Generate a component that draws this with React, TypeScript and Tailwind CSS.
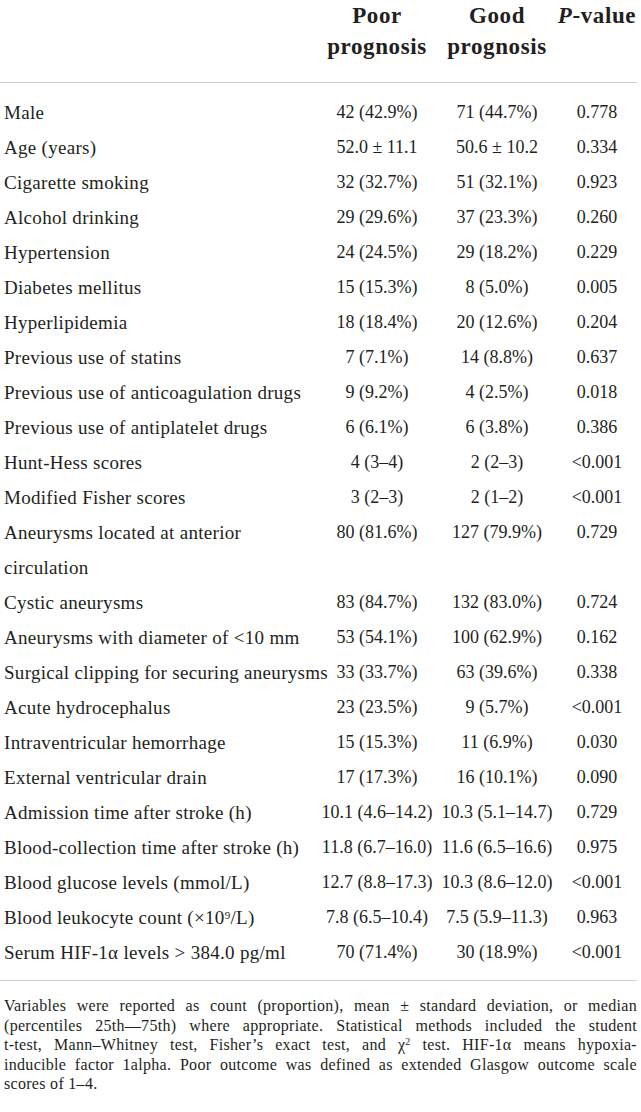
import React from "react";

type Row = {
    label: React.ReactNode;
    poor: React.ReactNode;
    good: React.ReactNode;
    p: string;
};

const rows: Row[] = [
    { label: "Male", poor: "42 (42.9%)", good: "71 (44.7%)", p: "0.778" },
    { label: "Age (years)", poor: "52.0 ± 11.1", good: "50.6 ± 10.2", p: "0.334" },
    { label: "Cigarette smoking", poor: "32 (32.7%)", good: "51 (32.1%)", p: "0.923" },
    { label: "Alcohol drinking", poor: "29 (29.6%)", good: "37 (23.3%)", p: "0.260" },
    { label: "Hypertension", poor: "24 (24.5%)", good: "29 (18.2%)", p: "0.229" },
    { label: "Diabetes mellitus", poor: "15 (15.3%)", good: "8 (5.0%)", p: "0.005" },
    { label: "Hyperlipidemia", poor: "18 (18.4%)", good: "20 (12.6%)", p: "0.204" },
    { label: "Previous use of statins", poor: "7 (7.1%)", good: "14 (8.8%)", p: "0.637" },
    { label: "Previous use of anticoagulation drugs", poor: "9 (9.2%)", good: "4 (2.5%)", p: "0.018" },
    { label: "Previous use of antiplatelet drugs", poor: "6 (6.1%)", good: "6 (3.8%)", p: "0.386" },
    { label: "Hunt-Hess scores", poor: "4 (3–4)", good: "2 (2–3)", p: "<0.001" },
    { label: "Modified Fisher scores", poor: "3 (2–3)", good: "2 (1–2)", p: "<0.001" },
    {
        label: (
            <>
                Aneurysms located at anterior
                <br />
                circulation
            </>
        ),
        poor: "80 (81.6%)",
        good: "127 (79.9%)",
        p: "0.729",
    },
    { label: "Cystic aneurysms", poor: "83 (84.7%)", good: "132 (83.0%)", p: "0.724" },
    { label: "Aneurysms with diameter of <10 mm", poor: "53 (54.1%)", good: "100 (62.9%)", p: "0.162" },
    { label: "Surgical clipping for securing aneurysms", poor: "33 (33.7%)", good: "63 (39.6%)", p: "0.338" },
    { label: "Acute hydrocephalus", poor: "23 (23.5%)", good: "9 (5.7%)", p: "<0.001" },
    { label: "Intraventricular hemorrhage", poor: "15 (15.3%)", good: "11 (6.9%)", p: "0.030" },
    { label: "External ventricular drain", poor: "17 (17.3%)", good: "16 (10.1%)", p: "0.090" },
    { label: "Admission time after stroke (h)", poor: "10.1 (4.6–14.2)", good: "10.3 (5.1–14.7)", p: "0.729" },
    { label: "Blood-collection time after stroke (h)", poor: "11.8 (6.7–16.0)", good: "11.6 (6.5–16.6)", p: "0.975" },
    { label: "Blood glucose levels (mmol/L)", poor: "12.7 (8.8–17.3)", good: "10.3 (8.6–12.0)", p: "<0.001" },
    {
        label: (
            <>
                Blood leukocyte count (×10<sup className="text-[11px]">9</sup>/L)
            </>
        ),
        poor: "7.8 (6.5–10.4)",
        good: "7.5 (5.9–11.3)",
        p: "0.963",
    },
    { label: "Serum HIF-1α levels > 384.0 pg/ml", poor: "70 (71.4%)", good: "30 (18.9%)", p: "<0.001" },
];

const cols = "grid grid-cols-[317px_120px_120px_80px]";

function Cell({ children }: { children: React.ReactNode }) {
    return <div className="flex justify-center whitespace-nowrap">{children}</div>;
}

export default function App() {
    return (
        <div
            className="w-[641px] bg-white text-[#231f20]"
            style={{ fontFamily: '"Liberation Serif", "Times New Roman", serif' }}
        >
            <div className={`${cols} pb-[20px] text-[23px] font-bold leading-[31px] tracking-[0.6px]`}>
                <div />
                <div className="flex flex-col items-center">
                    <span>Poor</span>
                    <span>prognosis</span>
                </div>
                <div className="flex flex-col items-center">
                    <span>Good</span>
                    <span>prognosis</span>
                </div>
                <div className="flex justify-center">
                    <span className="whitespace-nowrap">
                        <i>P</i>-value
                    </span>
                </div>
            </div>

            <div className="mr-1 h-px bg-[#cfcfcf]" />

            <div className="pt-3 pb-[10px] text-[18px] leading-[35px]">
                {rows.map((r, i) => (
                    <div key={i} className={cols}>
                        <div className="whitespace-nowrap pl-1 text-[19px] tracking-[0.3px]">{r.label}</div>
                        <Cell>{r.poor}</Cell>
                        <Cell>{r.good}</Cell>
                        <Cell>{r.p}</Cell>
                    </div>
                ))}
            </div>

            <div className="mr-1 h-px bg-[#cfcfcf]" />

            <p className="px-1 pt-[15px] text-justify text-[16px] leading-[19.5px] tracking-[0.3px]">
                <span className="block [text-align-last:justify]">
                    Variables were reported as count (proportion), mean ± standard deviation, or median
                </span>
                <span className="block [text-align-last:justify]">
                    (percentiles 25th—75th) where appropriate. Statistical methods included the student
                </span>
                <span className="block [text-align-last:justify]">
                    t-test, Mann–Whitney test, Fisher’s exact test, and χ
                    <sup className="text-[10px] leading-none">2</sup> test. HIF-1α means hypoxia-
                </span>
                <span className="block [text-align-last:justify]">
                    inducible factor 1alpha. Poor outcome was defined as extended Glasgow outcome scale
                </span>
                <span className="block">scores of 1–4.</span>
            </p>
        </div>
    );
}
